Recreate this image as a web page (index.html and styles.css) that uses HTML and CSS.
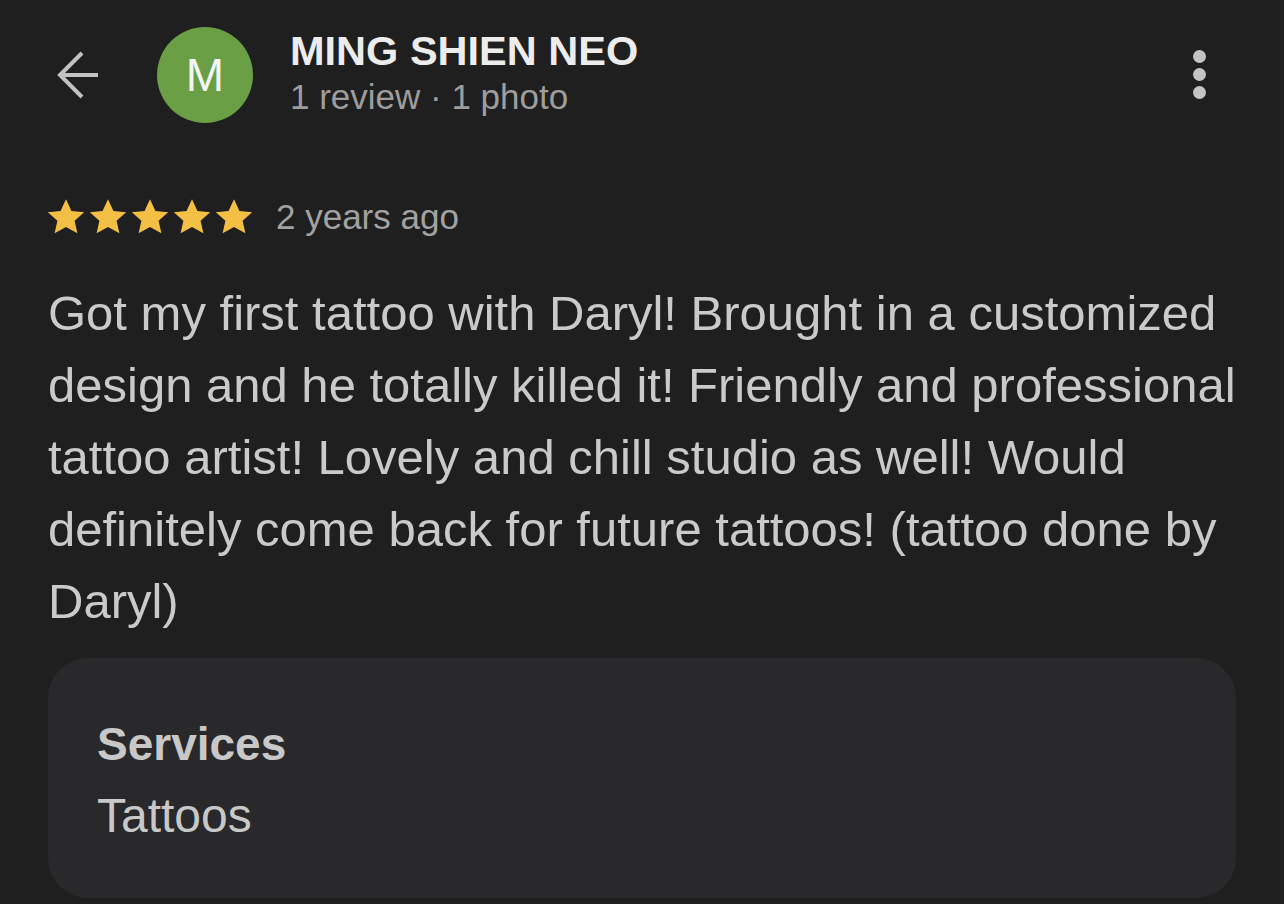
FILE: index.html
```html
<!DOCTYPE html>
<html lang="en">

<head>
    <meta charset="UTF-8">
    <meta name="viewport" content="width=device-width, initial-scale=1.0">
    <title>Review</title>
    <link rel="stylesheet" href="styles.css">
</head>

<body>
    <div class="page">
        <div class="header">
            <span class="back">
                <svg width="44" height="50" viewBox="0 0 44 50">
                    <path d="M42 25H4M26 3L4 25l22 22" fill="none" stroke="#c2c2c2" stroke-width="4" stroke-linejoin="miter"/>
                </svg>
            </span>
            <div class="avatar">M</div>
            <div class="who">
                <div class="name">MING SHIEN NEO</div>
                <div class="meta">1 review · 1 photo</div>
            </div>
            <span class="more">
                <i></i><i></i><i></i>
            </span>
        </div>

        <div class="rating">
            <span class="stars">
                <svg width="40" height="38" viewBox="0 0 24 23"><path d="M12 .8l3.3 7 7.7.8-5.8 5.2 1.7 7.6L12 17.5l-6.9 3.9 1.7-7.6L1 8.6l7.7-.8z" fill="#f4bf45"/></svg>
                <svg width="40" height="38" viewBox="0 0 24 23"><path d="M12 .8l3.3 7 7.7.8-5.8 5.2 1.7 7.6L12 17.5l-6.9 3.9 1.7-7.6L1 8.6l7.7-.8z" fill="#f4bf45"/></svg>
                <svg width="40" height="38" viewBox="0 0 24 23"><path d="M12 .8l3.3 7 7.7.8-5.8 5.2 1.7 7.6L12 17.5l-6.9 3.9 1.7-7.6L1 8.6l7.7-.8z" fill="#f4bf45"/></svg>
                <svg width="40" height="38" viewBox="0 0 24 23"><path d="M12 .8l3.3 7 7.7.8-5.8 5.2 1.7 7.6L12 17.5l-6.9 3.9 1.7-7.6L1 8.6l7.7-.8z" fill="#f4bf45"/></svg>
                <svg width="40" height="38" viewBox="0 0 24 23"><path d="M12 .8l3.3 7 7.7.8-5.8 5.2 1.7 7.6L12 17.5l-6.9 3.9 1.7-7.6L1 8.6l7.7-.8z" fill="#f4bf45"/></svg>
            </span>
            <span class="when">2 years ago</span>
        </div>

        <p class="text">Got my first tattoo with Daryl! Brought in a customized design and he totally killed it! Friendly and professional tattoo artist! Lovely and chill studio as well! Would definitely come back for future tattoos! (tattoo done by Daryl)</p>

        <div class="card">
            <div class="card-title">Services</div>
            <div class="card-value">Tattoos</div>
        </div>
    </div>
</body>

</html>
```

FILE: styles.css
```css
* {
    padding: 0;
    margin: 0;
    box-sizing: border-box;
}

html,
body {
    background-color: #1f1f1f;
    height: 100%;
    overflow: hidden;
}

body {
    font-family: "Liberation Sans", Arial, sans-serif;
    color: #cacaca;
}

.page {
    padding: 0 48px;
}

.header {
    display: flex;
    align-items: center;
    height: 150px;
}

.back {
    display: flex;
    width: 44px;
    height: 50px;
    margin-left: 8px;
    margin-top: 0;
}

.avatar {
    width: 96px;
    height: 96px;
    border-radius: 50%;
    background-color: #6b9f45;
    color: #f4f4f4;
    font-size: 46px;
    line-height: 96px;
    text-align: center;
    margin-left: 57px;
}

.who {
    flex: 1;
    margin-left: 37px;
    margin-top: -4px;
}

.name {
    font-size: 41.5px;
    font-weight: bold;
    color: #ececec;
    line-height: 48px;
}

.meta {
    font-size: 35px;
    color: #9d9d9d;
    line-height: 44px;
}

.more {
    display: flex;
    flex-direction: column;
    gap: 5px;
    margin-right: 30px;
    margin-top: -2px;
}

.more i {
    display: block;
    width: 13px;
    height: 13px;
    border-radius: 50%;
    background-color: #c4c4c4;
}

.rating {
    display: flex;
    align-items: center;
    margin-top: 45px;
    height: 44px;
}

.stars {
    display: flex;
    gap: 2px;
    margin-left: -2px;
}

.when {
    font-size: 35px;
    color: #a2a2a2;
    margin-left: 22px;
}

.text {
    font-size: 49px;
    line-height: 72px;
    color: #cacaca;
    margin-top: 38px;
}

.card {
    margin-top: 21px;
    height: 240px;
    border-radius: 40px;
    background-color: #29292b;
    padding: 58px 49px 0;
}

.card-title {
    font-size: 46px;
    font-weight: bold;
    color: #c8c8c8;
    line-height: 56px;
}

.card-value {
    font-size: 48px;
    color: #c8c8c8;
    line-height: 56px;
    margin-top: 16px;
}
```
